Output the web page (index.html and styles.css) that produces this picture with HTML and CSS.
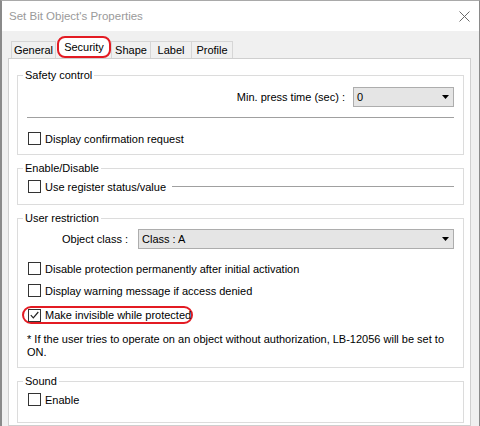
FILE: index.html
```html
<!DOCTYPE html>
<html>
<head>
<meta charset="utf-8">
<link rel="stylesheet" href="styles.css">
</head>
<body>
<div class="window">
  <div class="titlebar">
    <span class="title">Set Bit Object's Properties</span>
    <svg class="close" width="11" height="11" viewBox="0 0 11 11"><path d="M0.5 0.5L10.5 10.5M10.5 0.5L0.5 10.5" stroke="#6a6a6a" stroke-width="1" fill="none"/></svg>
  </div>
  <div class="body">
    <div class="tabs">
      <div class="tab t-general">General</div>
      <div class="tab active">Security</div>
      <div class="tab t-shape">Shape</div>
      <div class="tab t-label">Label</div>
      <div class="tab t-profile">Profile</div>
    </div>
    <div class="panel">
      <div class="group g-safety">
        <div class="legend">Safety control</div>
        <div class="row-select rs-first">
          <span class="sel-label">Min. press time (sec) :</span>
          <div class="select sel-small"><span>0</span><svg width="7" height="4" viewBox="0 0 7 4"><path d="M0 0H7L3.5 4Z" fill="#000"/></svg></div>
        </div>
        <div class="hr"></div>
        <div class="row r-confirm"><span class="cb"></span><span>Display confirmation request</span></div>
      </div>
      <div class="group g-enable">
        <div class="legend">Enable/Disable</div>
        <div class="row r-enable"><span class="cb"></span><span>Use register status/value</span><span class="line"></span></div>
      </div>
      <div class="group g-user">
        <div class="legend">User restriction</div>
        <div class="row-select rs-class">
          <span class="sel-label">Object class :</span>
          <div class="select sel-wide"><span>Class : A</span><svg width="7" height="4" viewBox="0 0 7 4"><path d="M0 0H7L3.5 4Z" fill="#000"/></svg></div>
        </div>
        <div class="row r-disable"><span class="cb"></span><span>Disable protection permanently after initial activation</span></div>
        <div class="row r-warn"><span class="cb"></span><span>Display warning message if access denied</span></div>
        <div class="row hl"><span class="cb"><svg width="11" height="11" viewBox="0 0 11 11"><path d="M1.8 5.2L4.3 7.8L9.3 2" stroke="#222" stroke-width="1.2" fill="none"/></svg></span><span>Make invisible while protected</span></div>
        <p class="note">* If the user tries to operate on an object without authorization, LB-12056 will be set to<br>ON.</p>
      </div>
      <div class="group g-sound">
        <div class="legend">Sound</div>
        <div class="row r-sound"><span class="cb"></span><span>Enable</span></div>
      </div>
    </div>
  </div>
</div>
</body>
</html>
```
FILE: styles.css
```css
* { box-sizing: border-box; }
body {
  margin: 0;
  font-family: "Liberation Sans", Arial, sans-serif;
  font-size: 11px;
  color: #000;
  background: #fff;
}
.window {
  width: 480px;
  height: 426px;
  border-left: 2px solid #8a8a8a;
  border-right: 1px solid #8a8a8a;
  border-top: 1px solid #a9a9a9;
  overflow: hidden;
  display: flex;
  flex-direction: column;
  background: #f0f0f0;
}
.titlebar {
  height: 30px;
  flex: none;
  background: #fff;
  display: flex;
  align-items: center;
  justify-content: space-between;
  padding: 0 9px 0 7px;
  color: #9a9a9a;
  font-size: 11.5px;
}
.body {
  flex: 1;
  padding: 5px 8px 0 6px;
  display: flex;
  flex-direction: column;
  min-height: 0;
}
.tabs {
  display: flex;
  align-items: flex-end;
  padding-left: 3px;
  height: 22px;
  flex: none;
}
.tab {
  height: 17px;
  border: 1px solid #d6d6d6;
  border-bottom: none;
  display: flex;
  align-items: center;
  justify-content: center;
  background: #f0f0f0;
}
.t-general { width: 45px; }
.active {
  height: 22px;
  width: 54px;
  margin-left: 1px;
  border: 2px solid #e31b23;
  border-radius: 8px;
  background: #fff;
}
.t-shape { width: 40px; }
.t-label { width: 42px; margin-left: -1px; }
.t-profile { width: 42px; margin-left: -1px; }
.panel {
  flex: 1;
  background: #fff;
  border: 1px solid #cfcfcf;
  padding-top: 16px;
}
.group {
  margin: 0 6px 0 8px;
  border: 1px solid #dcdcdc;
  padding: 0 9px 0 10px;
}
.group + .group { margin-top: 13px; }
.legend {
  width: fit-content;
  margin: -8px 0 0 -5px;
  padding: 0 2px;
  background: #fff;
  line-height: 14px;
  height: 14px;
}
.row-select {
  display: flex;
  align-items: center;
  justify-content: flex-end;
  height: 20px;
}
.rs-first { margin-top: 5px; }
.rs-class { margin-top: 4px; }
.sel-label { margin-right: 8px; }
.rs-class .sel-label { margin-right: 10px; }
.select {
  height: 20px;
  border: 1px solid #adadad;
  background: #e5e5e5;
  display: flex;
  align-items: center;
  justify-content: space-between;
  padding: 0 4px 0 3px;
}
.sel-small { width: 101px; }
.sel-wide { width: 316px; }
.hr {
  height: 1px;
  background: #a0a0a0;
  margin: 10px 0 0 -1px;
}
.row {
  display: flex;
  align-items: center;
  height: 17px;
  gap: 4px;
  white-space: nowrap;
}
.cb {
  width: 13px;
  height: 13px;
  flex: none;
  border: 1px solid #333;
  background: #fff;
  display: flex;
}
.r-confirm { margin-top: 12px; }
.g-safety { padding-bottom: 7px; }
.r-enable { margin-top: 3px; }
.g-enable { padding-bottom: 9px; }
.line {
  flex: 1;
  height: 1px;
  background: #a0a0a0;
  margin-left: 2px;
}
.r-disable { margin-top: 11px; }
.r-warn { margin-top: 5px; }
.hl {
  margin: 7px 0 0 -6px;
  height: 18px;
  width: 171px;
  padding-left: 4px;
  border: 2px solid #e31b23;
  border-radius: 9px;
}
.note {
  margin: 9px 0 0 -1px;
  line-height: 13px;
  white-space: nowrap;
}
.g-user { padding-bottom: 8px; }
.r-sound { margin-top: 3px; }
.g-sound { padding-bottom: 14px; }
```
